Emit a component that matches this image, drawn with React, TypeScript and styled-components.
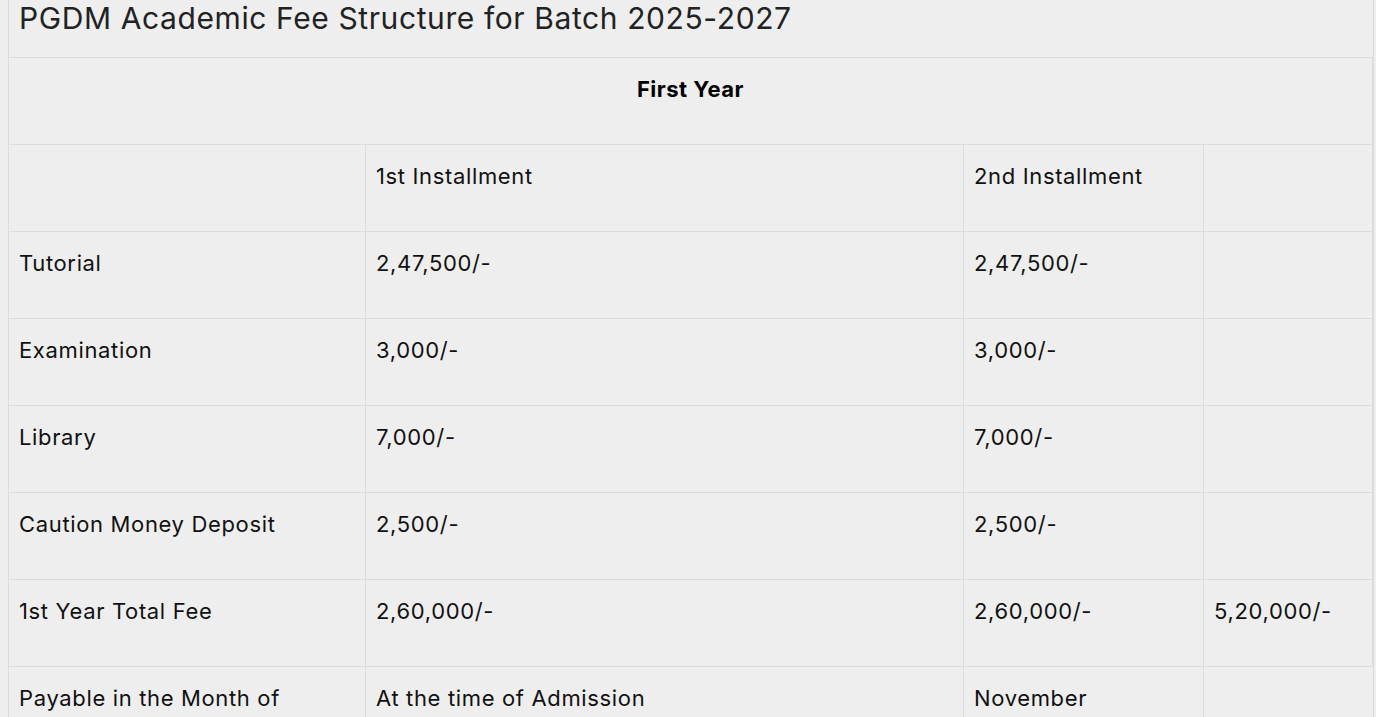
import React from "react";
import styled, { createGlobalStyle } from "styled-components";

const GlobalStyle = createGlobalStyle`
  html, body {
    margin: 0;
    padding: 0;
    background: #eeeeee;
  }
  body {
    font-family: Inter, "Open Sans", "Liberation Sans", sans-serif;
    color: #111;
  }
`;

const Wrapper = styled.div`
  margin-left: 8px;
  width: 1366px;
  box-sizing: border-box;
  border-left: 1px solid #dcdcdc;
  border-right: 1px solid #dcdcdc;
  background: #eeeeee;
`;

const Title = styled.h2`
  margin: 0;
  height: 58px;
  box-sizing: border-box;
  border-bottom: 1px solid #dcdcdc;
  padding: 0 0 0 10px;
  font-size: 30px;
  font-weight: 400;
  line-height: 36px;
  color: #222;
  letter-spacing: 0.6px;
`;

const Grid = styled.div`
  display: grid;
  grid-template-columns: 357px 598px 240px 169px;
`;

const Cell = styled.div<{ $span?: number; $center?: boolean; $bold?: boolean }>`
  grid-column: span ${(p) => p.$span ?? 1};
  height: 87px;
  box-sizing: border-box;
  border-bottom: 1px solid #dcdcdc;
  border-right: 1px solid #dcdcdc;
  padding: 18px 10px 0 10px;
  font-size: 22px;
  font-weight: ${(p) => (p.$bold ? 700 : 400)};
  letter-spacing: ${(p) => (p.$bold ? "0.5px" : "0.65px")};
  line-height: 26px;
  text-align: ${(p) => (p.$center ? "center" : "left")};
  color: ${(p) => (p.$bold ? "#000" : "#111")};
  white-space: nowrap;
  &:last-child {
    border-right: none;
  }
`;

const rows: string[][] = [
  ["", "1st Installment", "2nd Installment", ""],
  ["Tutorial", "2,47,500/-", "2,47,500/-", ""],
  ["Examination", "3,000/-", "3,000/-", ""],
  ["Library", "7,000/-", "7,000/-", ""],
  ["Caution Money Deposit", "2,500/-", "2,500/-", ""],
  ["1st Year Total Fee", "2,60,000/-", "2,60,000/-", "5,20,000/-"],
  ["Payable in the Month of", "At the time of Admission", "November", ""],
];

export default function App() {
  return (
    <>
      <GlobalStyle />
      <Wrapper>
        <Title>PGDM Academic Fee Structure for Batch 2025-2027</Title>
        <Grid>
          <Cell $span={4} $center $bold>
            First Year
          </Cell>
          {rows.map((r, i) =>
            r.map((c, j) => <Cell key={`${i}-${j}`}>{c}</Cell>)
          )}
        </Grid>
      </Wrapper>
    </>
  );
}
